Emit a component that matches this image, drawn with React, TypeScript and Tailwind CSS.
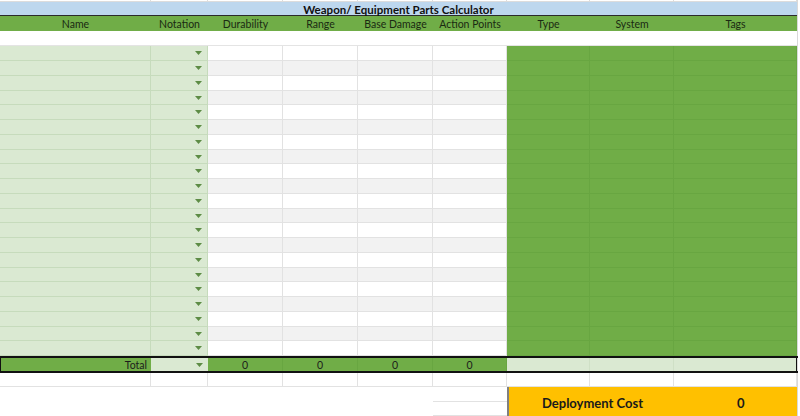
import React from "react";

type Kind = "lg" | "w" | "g";
const cols: { w: string; kind: Kind; label: string }[] = [
  { w: "w-[151px]", kind: "lg", label: "Name" },
  { w: "w-[57px]", kind: "lg", label: "Notation" },
  { w: "w-[75px]", kind: "w", label: "Durability" },
  { w: "w-[75px]", kind: "w", label: "Range" },
  { w: "w-[75px]", kind: "w", label: "Base Damage" },
  { w: "w-[74px]", kind: "w", label: "Action Points" },
  { w: "w-[83px]", kind: "g", label: "Type" },
  { w: "w-[84px]", kind: "g", label: "System" },
  { w: "w-[123px]", kind: "g", label: "Tags" },
];

const short = new Set([3, 7, 11, 15, 19]);

function Arrow() {
  return (
    <svg width="7" height="4" viewBox="0 0 7 4" className="block">
      <polygon points="0,0 7,0 3.5,4" fill="#5d8c45" />
    </svg>
  );
}

function DataRow({ i }: { i: number }) {
  const h = short.has(i) ? "h-[14px]" : "h-[15px]";
  const alt = i % 2 === 1;
  return (
    <div className={`flex ${h}`}>
      {cols.map((c, ci) => {
        let cls = "";
        if (c.kind === "lg") cls = "bg-[#dae9d2] border-r border-b border-[#c6dbbc]";
        else if (c.kind === "w")
          cls = `${alt ? "bg-[#f2f2f2]" : "bg-white"} border-r border-b border-[#e2e2e2]`;
        else cls = "bg-[#70ad47] border-r border-b border-[#68a641]";
        return (
          <div key={ci} className={`${c.w} ${cls} h-full flex items-center justify-end pr-[5px]`}>
            {ci === 1 ? <Arrow /> : null}
          </div>
        );
      })}
    </div>
  );
}

export default function App() {
  const font = { fontFamily: "Lato, 'Liberation Sans', sans-serif" };
  return (
    <div className="w-[800px] h-[416px] bg-white overflow-hidden text-[#1c1c1c]" style={font}>
      <div className="w-[798px] border-r border-[#d9d9d9] h-full">
        {/* top strip */}
        <div className="flex h-[2px]">
          {cols.map((c, ci) => (
            <div key={ci} className={`${c.w} h-full border-r border-b border-[#dcdcdc] bg-white`} />
          ))}
        </div>
        {/* title */}
        <div className="h-[14px] bg-[#bdd7ee] border-b border-[#2b2b2b] flex items-start justify-center w-[797px]">
          <span className="text-[11.5px] font-bold leading-[15px] text-[#111]">Weapon/ Equipment Parts Calculator</span>
        </div>
        {/* header */}
        <div className="flex h-[15px] bg-[#70ad47] w-[797px]">
          {cols.map((c, ci) => (
            <div key={ci} className={`${c.w} h-full flex items-start justify-center pt-[1px] text-[10.5px] leading-[15px] text-[#1a2a12]`}>
              {c.label}
            </div>
          ))}
        </div>
        {/* blank white row */}
        <div className="flex h-[15px]">
          {cols.map((c, ci) => (
            <div key={ci} className={`${c.w} h-full bg-white border-b border-[#e4e4e4]`} />
          ))}
        </div>
        {Array.from({ length: 21 }).map((_, i) => (
          <DataRow key={i} i={i} />
        ))}
        {/* total row */}
        <div className="flex h-[17px] border-y-2 border-l border-[#111] w-[798px]">
          {cols.map((c, ci) => {
            if (ci === 0)
              return (
                <div key={ci} className={`w-[150px] h-full bg-[#70ad47] flex items-start justify-end pr-[4px] pt-[1px] text-[10.5px] leading-[13px]`}>
                  Total
                </div>
              );
            if (ci === 1)
              return (
                <div key={ci} className={`${c.w} h-full bg-[#dae9d2] flex items-center justify-end pr-[5px]`}>
                  <Arrow />
                </div>
              );
            if (c.kind === "w")
              return (
                <div key={ci} className={`${c.w} h-full bg-[#70ad47] border-r border-[#68a641] flex items-start justify-center pt-[1px] text-[10.5px] leading-[13px]`}>
                  0
                </div>
              );
            return (
              <div key={ci} className={`${ci === 8 ? "w-[123px] border-r border-[#111]" : c.w + " border-r border-[#cfe0c6]"} h-full bg-[#dae9d2]`} />
            );
          })}
        </div>
        {/* white row after total */}
        <div className="flex h-[14px]">
          {cols.map((c, ci) => (
            <div key={ci} className={`${c.w} h-full bg-white border-r border-b border-[#e2e2e2]`} />
          ))}
        </div>
        {/* bottom area */}
        <div className="flex h-[29px]">
          <div className="w-[433px] h-full bg-white" />
          <div className="w-[74px] h-full flex flex-col">
            <div className="h-[15px] border-b border-[#e2e2e2]" />
            <div className="h-[14px] border-b border-[#e2e2e2]" />
          </div>
          <div className="w-[290px] h-full bg-[#ffc000] border-l-2 border-[#808080] flex items-center pt-[4px] text-[13px] font-bold text-[#1a1a1a]">
            <span className="pl-[33px] w-[228px]">Deployment Cost</span>
            <span>0</span>
          </div>
        </div>
      </div>
    </div>
  );
}
